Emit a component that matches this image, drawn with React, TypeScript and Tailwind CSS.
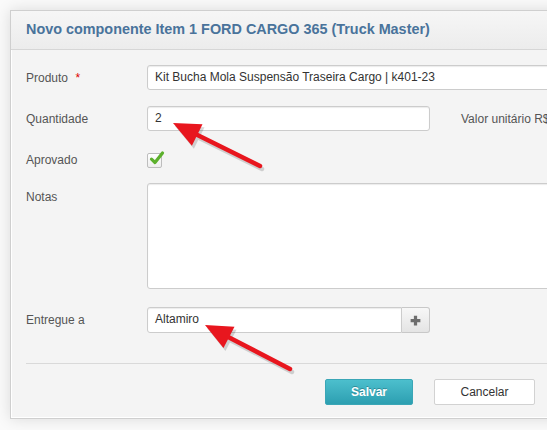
import type React from "react";

type Pt = [number, number];

const Arrow: React.FC<{ tip: Pt; tail: Pt }> = ({ tip, tail }) => {
  const dx = tail[0] - tip[0];
  const dy = tail[1] - tip[1];
  const len = Math.hypot(dx, dy);
  const ux = dx / len;
  const uy = dy / len;
  const nx = -uy;
  const ny = ux;
  const headLen = 27;
  const headHalf = 12;
  const bx = tip[0] + ux * headLen;
  const by = tip[1] + uy * headLen;
  const head = [
    tip,
    [bx + nx * headHalf, by + ny * headHalf],
    [bx - nx * headHalf, by - ny * headHalf],
  ]
    .map((p) => p.join(","))
    .join(" ");
  return (
    <g>
      <g transform="translate(2,3)" opacity="0.15">
        <line x1={tail[0]} y1={tail[1]} x2={bx} y2={by} stroke="#000" strokeWidth="4.5" strokeLinecap="round" />
        <polygon points={head} fill="#000" />
      </g>
      <line x1={tail[0]} y1={tail[1]} x2={bx - ux * 2} y2={by - uy * 2} stroke="#e8161e" strokeWidth="4.5" strokeLinecap="round" />
      <polygon points={head} fill="#e8161e" />
    </g>
  );
};

const Label: React.FC<{ children: React.ReactNode; className?: string }> = ({ children, className = "" }) => (
  <div className={`w-[121px] shrink-0 text-[12px] text-[#555] ${className}`}>{children}</div>
);

const inputCls =
  "h-[25px] rounded-[3px] border border-[#ccc] bg-white px-[7px] text-[12px] leading-[23px] text-[#333] shadow-[inset_0_1px_1px_rgba(0,0,0,0.08)]";

export default function App() {
  return (
    <div
      className="relative h-[430px] w-[547px] overflow-hidden bg-[#fafafa]"
      style={{ fontFamily: '"Liberation Sans", Arial, sans-serif' }}
    >
      <div className="ml-[10px] mt-[10px] w-[600px] border border-[#cfcfcf] bg-[#f4f4f4] shadow-[0_0_14px_rgba(0,0,0,0.13)]">
        <div className="flex h-[39px] items-center border-b border-[#d6d6d6] bg-gradient-to-b from-[#f6f6f6] to-[#ececec] pl-[15px]">
          <h1 className="text-[14.4px] font-bold text-[#49739b]">Novo componente Item 1 FORD CARGO 365 (Truck Master)</h1>
        </div>

        <div className="flex flex-col pb-[13px] pl-[15px] shadow-[inset_1px_-1px_0_#fff]">
          <div className="mt-[15px] flex items-center">
            <Label>
              Produto <span className="ml-[4px] text-[#d00]">*</span>
            </Label>
            <div className={`${inputCls} w-[420px]`}>Kit Bucha Mola Suspensão Traseira Cargo | k401-23</div>
          </div>

          <div className="mt-[16px] flex items-center">
            <Label>Quantidade</Label>
            <div className={`${inputCls} w-[283px]`}>2</div>
            <div className="ml-[31px] whitespace-nowrap text-[12px] text-[#555]">Valor unitário R$</div>
          </div>

          <div className="mt-[20px] flex items-center">
            <Label>Aprovado</Label>
            <div className="relative h-[15px] w-[15px] rounded-[2px] border border-[#bdbdbd] bg-gradient-to-b from-white to-[#eee]">
              <svg viewBox="0 0 16 16" className="absolute -top-[4px] left-[1px] h-[16px] w-[16px]">
                <path d="M2.5 9.2 L6 12.5 L13.5 3" fill="none" stroke="#5cb02c" strokeWidth="3.2" strokeLinecap="round" strokeLinejoin="round" />
              </svg>
            </div>
          </div>

          <div className="mt-[14px] flex items-start">
            <Label className="mt-[5px]">Notas</Label>
            <div className="h-[106px] w-[420px] rounded-[3px] border border-[#ccc] bg-white shadow-[inset_0_1px_1px_rgba(0,0,0,0.08)]" />
          </div>

          <div className="mt-[18px] flex items-center">
            <Label>Entregue a</Label>
            <div className={`${inputCls} h-[26px] w-[255px] rounded-r-none`}>Altamiro</div>
            <div className="flex h-[26px] w-[28px] items-center justify-center rounded-r-[3px] border border-l-0 border-[#c8c8c8] bg-gradient-to-b from-[#f7f7f7] to-[#e4e4e4]">
              <svg viewBox="0 0 12 12" className="h-[13px] w-[13px]">
                <path d="M6 1.5 V10.5 M1.5 6 H10.5" stroke="#6d6d6d" strokeWidth="3" />
              </svg>
            </div>
          </div>

          <div className="mt-[30px] h-px bg-[#d9d9d9]" />

          <div className="ml-[299px] mt-[15px] flex gap-[21px]">
            <button className="h-[26px] w-[88px] rounded-[2px] border border-[#3aa6b6] bg-gradient-to-b from-[#4cbfcd] to-[#2c9fb1] text-[12px] font-bold text-white [text-shadow:0_-1px_0_rgba(0,0,0,0.25)]">
              Salvar
            </button>
            <button className="h-[26px] w-[101px] rounded-[2px] border border-[#d2d2d2] bg-white text-[12px] text-[#333]">
              Cancelar
            </button>
          </div>
        </div>
      </div>

      <svg className="pointer-events-none absolute left-0 top-0" width="547" height="430">
        <Arrow tip={[173, 123]} tail={[260, 166]} />
        <Arrow tip={[205, 325]} tail={[290, 369]} />
      </svg>
    </div>
  );
}
